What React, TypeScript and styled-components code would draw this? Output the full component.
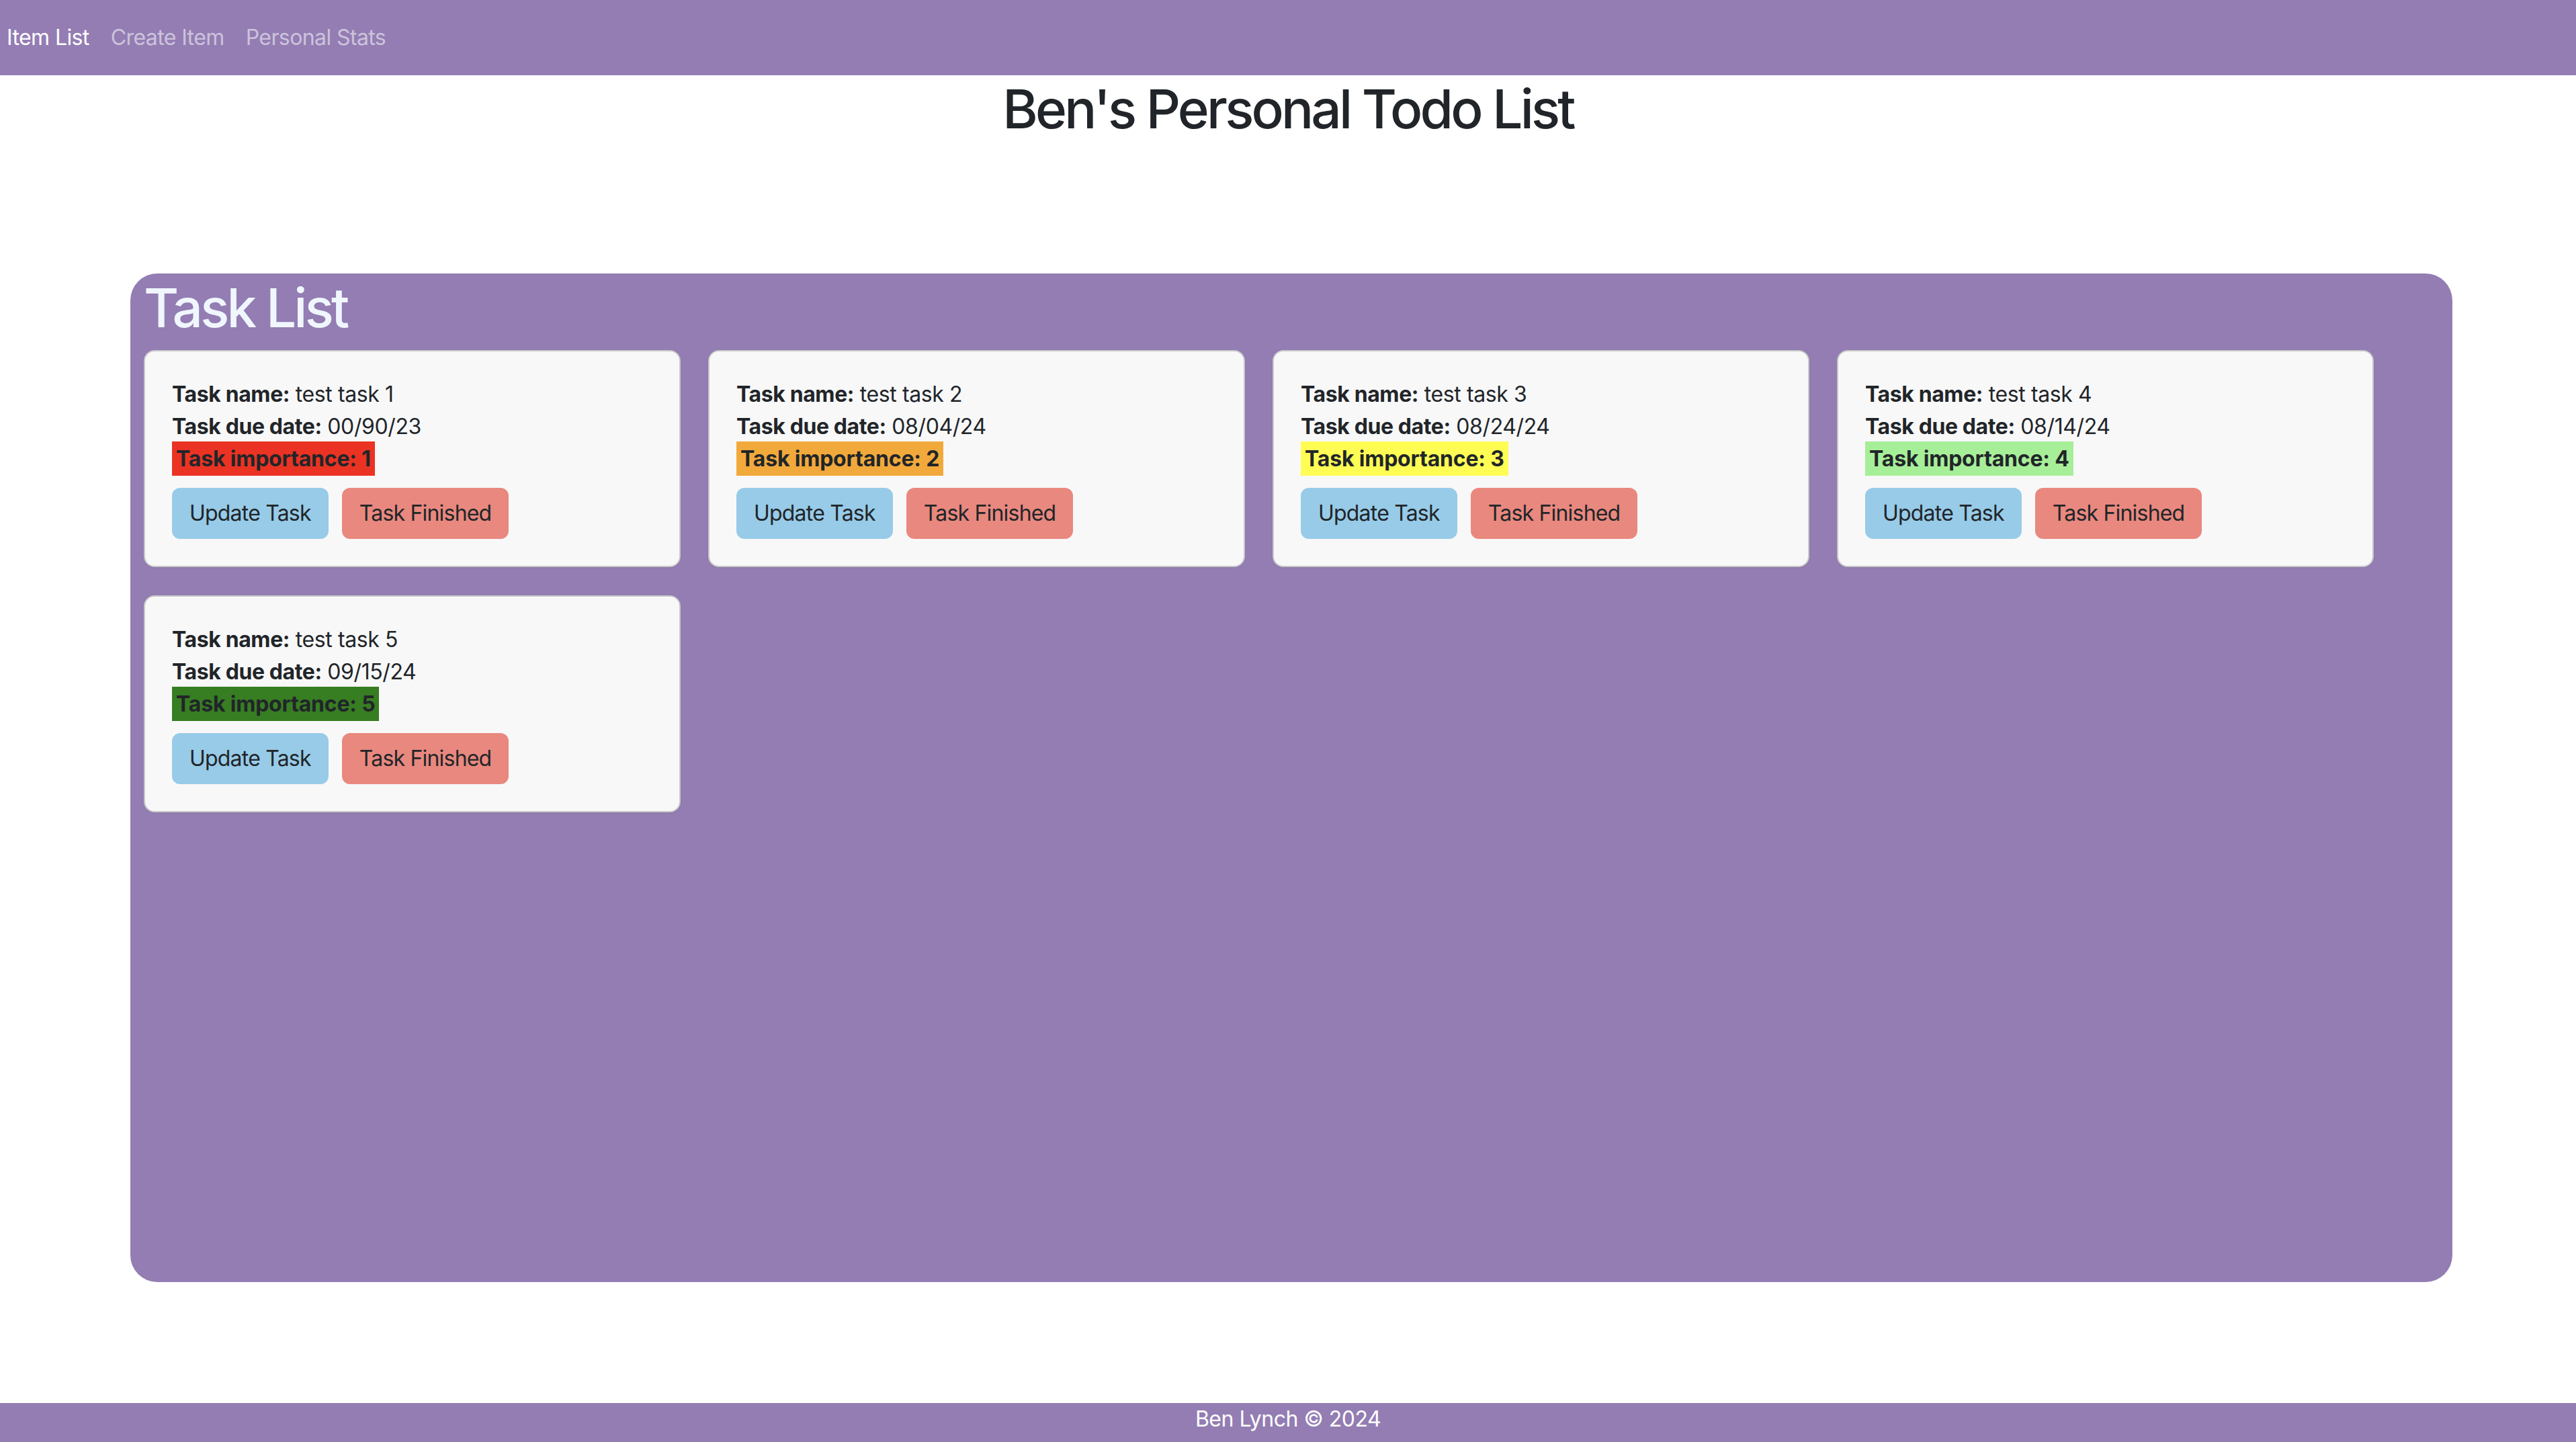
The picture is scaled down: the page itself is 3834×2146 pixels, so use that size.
import React from "react";
import styled, { createGlobalStyle } from "styled-components";

const PURPLE = "#937db3";

const GlobalStyle = createGlobalStyle`
  html, body {
    margin: 0;
    padding: 0;
  }
  body {
    font-family: Inter, "Noto Sans", "Liberation Sans", sans-serif;
    font-size: 32px;
    line-height: 1.5;
    color: #212529;
    background: #ffffff;
  }
  * { box-sizing: border-box; }
`;

const Page = styled.div`
  min-height: 100vh;
  display: flex;
  flex-direction: column;
`;

const NavBar = styled.nav`
  height: 112px;
  background: ${PURPLE};
  display: flex;
  align-items: center;
  padding-left: 10px;
  gap: 32px;
`;

const NavLink = styled.a<{ $active?: boolean }>`
  font-size: 32px;
  letter-spacing: -0.6px;
  text-decoration: none;
  color: ${(p) => (p.$active ? "#ffffff" : "rgba(255,255,255,0.55)")};
  cursor: pointer;
`;

const Title = styled.h1`
  margin: 2px 0 16px;
  font-size: 80px;
  font-weight: 500;
  line-height: 96px;
  letter-spacing: -3.8px;
  text-align: center;
  color: #212529;
`;

const Panel = styled.section`
  margin-top: 181px;
  margin-left: 194px;
  width: 3456px;
  height: 1501px;
  background: ${PURPLE};
  border-radius: 40px;
  padding: 3px 20px 0 20px;
`;

const PanelHeading = styled.h1`
  margin: 0 0 15px;
  font-size: 80px;
  font-weight: 500;
  line-height: 96px;
  letter-spacing: -3.8px;
  color: #f0f6fd;
`;

const CardGrid = styled.div`
  display: flex;
  flex-wrap: wrap;
  column-gap: 41px;
  row-gap: 42px;
`;

const Card = styled.div`
  width: 799px;
  background: #f8f8f8;
  border: 2px solid #c9c9c9;
  border-radius: 16px;
  padding: 40px;
  box-shadow: 0 1px 2px rgba(0, 0, 0, 0.08);
`;

const Line = styled.div`
  line-height: 48px;
  letter-spacing: -0.4px;
`;

const Label = styled.b`
  font-weight: 700;
`;

const Mark = styled.span<{ $bg: string }>`
  background: ${(p) => p.$bg};
  padding: 6px;
  font-weight: 700;
  letter-spacing: -0.2px;
`;

const Actions = styled.div`
  display: flex;
  gap: 20px;
  margin-top: 19px;
`;

const Button = styled.button<{ $bg: string }>`
  font-family: inherit;
  font-size: 32px;
  line-height: 48px;
  letter-spacing: -0.8px;
  color: #212529;
  background: ${(p) => p.$bg};
  border: 2px solid transparent;
  border-radius: 12px;
  padding: 12px 24px;
  cursor: pointer;
`;

const Footer = styled.footer`
  margin-top: auto;
  height: 58px;
  background: ${PURPLE};
  color: #ffffff;
  text-align: center;
  line-height: 48px;
  letter-spacing: -0.5px;
`;

const IMPORTANCE_COLORS: Record<number, string> = {
  1: "#ea3323",
  2: "#f2a93b",
  3: "#fffd54",
  4: "#a7ee98",
  5: "#377d22",
};

const tasks = [
  { name: "test task 1", due: "00/90/23", importance: 1 },
  { name: "test task 2", due: "08/04/24", importance: 2 },
  { name: "test task 3", due: "08/24/24", importance: 3 },
  { name: "test task 4", due: "08/14/24", importance: 4 },
  { name: "test task 5", due: "09/15/24", importance: 5 },
];

export default function App() {
  return (
    <Page>
      <GlobalStyle />
      <NavBar>
        <NavLink $active>Item List</NavLink>
        <NavLink>Create Item</NavLink>
        <NavLink>Personal Stats</NavLink>
      </NavBar>
      <Title>Ben's Personal Todo List</Title>
      <Panel>
        <PanelHeading>Task List</PanelHeading>
        <CardGrid>
          {tasks.map((t) => (
            <Card key={t.name}>
              <Line>
                <Label>Task name:</Label> {t.name}
              </Line>
              <Line>
                <Label>Task due date:</Label> {t.due}
              </Line>
              <Line>
                <Mark $bg={IMPORTANCE_COLORS[t.importance]}>
                  Task importance: {t.importance}
                </Mark>
              </Line>
              <Actions>
                <Button $bg="#97cbe8">Update Task</Button>
                <Button $bg="#e9887e">Task Finished</Button>
              </Actions>
            </Card>
          ))}
        </CardGrid>
      </Panel>
      <Footer>Ben Lynch © 2024</Footer>
    </Page>
  );
}
